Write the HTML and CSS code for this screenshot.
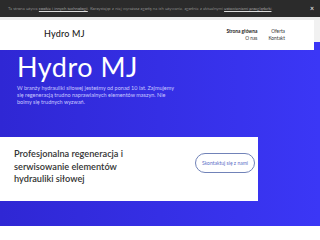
FILE: index.html
```html
<!DOCTYPE html>
<html lang="pl">
<head>
    <meta charset="UTF-8">
    <meta name="viewport" content="width=device-width, initial-scale=1.0">
    <title>Hydro MJ</title>
    <link rel="stylesheet" href="styles.css">
</head>
<body>
    <div class="cookie-bar">
        <div class="cookie-text">Ta strona używa <a href="#">cookie i innych technologii</a>. Korzystając z niej wyrażasz zgodę na ich używanie, zgodnie z aktualnymi <a href="#">ustawieniami przeglądarki</a>.</div>
        <span class="cookie-close">×</span>
    </div>

    <div class="top-row">
        <header class="header">
            <div class="logo">Hydro MJ</div>
            <nav class="nav">
                <a href="#" class="active">Strona główna</a>
                <a href="#">Oferta</a>
                <a href="#">O nas</a>
                <a href="#">Kontakt</a>
            </nav>
        </header>
        <div class="side-strip"></div>
    </div>

    <section class="hero">
        <h1>Hydro MJ</h1>
        <p>W branży hydrauliki siłowej jesteśmy od ponad 10 lat. Zajmujemy się regeneracją trudno naprawialnych elementów maszyn. Nie boimy się trudnych wyzwań.</p>
    </section>

    <section class="offer">
        <div class="offer-card">
            <h2>Profesjonalna regeneracja i serwisowanie elementów hydrauliki siłowej</h2>
            <a href="#" class="btn-contact">Skontaktuj się z nami</a>
        </div>
    </section>

    <div class="page-bottom"></div>
</body>
</html>
```

FILE: styles.css
```css
body { margin: 0; padding: 0; background: #fff; font-family: Lato, 'Open Sans', sans-serif; width: 320px; height: 240px; overflow: hidden; }

/* pasek cookie */
.cookie-bar { background: #2b2b2b; color: #bdbdbd; display: flex; align-items: center; padding: 0 6px 0 8px; box-sizing: border-box; border-bottom: 3px solid #ececec; height: 20px; }
.cookie-text { font-size: 4.3px; white-space: nowrap; flex: 1; font-weight: 300; }
.cookie-text a { color: #dcdcdc; text-decoration: underline; }
.cookie-close { font-size: 7px; color: #fff; line-height: 1; }

/* naglowek */
.top-row { display: flex; height: 30px; }
.header { width: 314px; background: #fff; display: flex; align-items: center; justify-content: space-between; padding: 0 29px 0 44px; box-sizing: border-box; }
.side-strip { flex: 1; background: linear-gradient(#f1f1f1 0 22px, #3a35f5 22px); }
.logo { font-size: 9px; color: #222; font-weight: 500; letter-spacing: 0.2px; margin-top: -4px; }
.nav { display: grid; grid-template-columns: auto auto; column-gap: 11px; row-gap: 1.5px; justify-items: end; margin-top: -1px; }
.nav a { font-size: 4.8px; color: #333; text-decoration: none; }
.nav a.active { font-weight: 700; color: #222; }

/* hero */
.hero { height: 86px; background: linear-gradient(90deg, #2f27d4, #3b37f6); padding: 2px 0 0 17px; box-sizing: border-box; color: #fff; }
.hero h1 { margin: 0; font-size: 27px; font-weight: 400; line-height: 30px; letter-spacing: 0.5px; }
.hero p { margin: 3px 0 0; width: 163px; font-size: 5.5px; line-height: 7px; color: #c9c8ff; }

/* oferta */
.offer { height: 90px; background: linear-gradient(90deg, #2f27d4, #3b37f6); padding-top: 1px; box-sizing: border-box; }
.offer-card { width: 258px; height: 64px; background: #fff; display: flex; align-items: flex-start; justify-content: space-between; padding: 11px 3px 0 14px; box-sizing: border-box; }
.offer-card h2 { margin: 0; width: 130px; font-size: 9.2px; line-height: 12.5px; font-weight: 600; color: #333; }
.btn-contact { margin-top: 5px; padding: 0 6px; height: 18px; display: flex; align-items: center; border: 1px solid #7183b8; border-radius: 10px; font-size: 5px; color: #5b6ec6; text-decoration: none; }

.page-bottom { height: 14px; background: #fff; }
```
